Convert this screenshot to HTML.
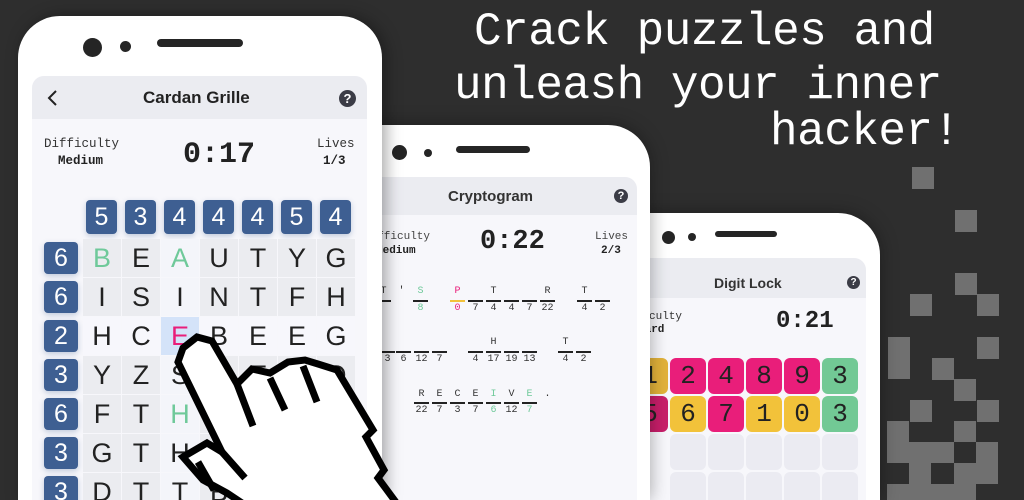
<!DOCTYPE html>
<html style="width:1024px;height:500px;overflow:hidden"><head><meta charset="utf-8"><style>
*{margin:0;padding:0;box-sizing:border-box}
body{width:1024px;height:500px;overflow:hidden;background:#2e2e2e;position:relative;font-family:"Liberation Sans",sans-serif}
.a{position:absolute}
.mono{font-family:"Liberation Mono",monospace}
.phone{position:absolute;background:#fff;border-radius:42px;box-shadow:0 0 18px rgba(0,0,0,.35);overflow:hidden}
.scr{position:absolute;background:#f7f7fb;border-radius:12px 12px 0 0;overflow:hidden}
.hdr{position:absolute;left:0;right:0;top:0;background:#ebecf1}
.q{position:absolute;border-radius:50%;background:#3b3c46;color:#fff;font-weight:bold;text-align:center}
.dot{position:absolute;border-radius:50%;background:#252525}
.bar{position:absolute;background:#252525;border-radius:4px}
.sq{position:absolute;width:22px;height:22px;background:#707070}
.ch{position:absolute;width:31px;height:34px;background:#3e5f92;border-radius:4px;color:#fff;font-size:25px;text-align:center;line-height:34px;font-family:"Liberation Sans",sans-serif;box-shadow:0 2px 6px rgba(62,95,146,.3)}
.rn{position:absolute;width:34px;height:32px;background:#3e5f92;border-radius:4px;color:#fff;font-size:25px;text-align:center;line-height:32px;box-shadow:0 2px 6px rgba(62,95,146,.3)}
.c{position:absolute;width:38px;height:38px;background:#ebecf0;font-family:"Liberation Sans",sans-serif;font-size:27px;text-align:center;line-height:38px;color:#222}
.t{position:absolute;width:36px;height:36px;border-radius:6px;font-family:"Liberation Mono",monospace;font-size:26px;text-align:center;line-height:36px;color:#222}
.cl{position:absolute;width:15px;text-align:center;font-family:"Liberation Mono",monospace;font-size:10px;color:#333}
.ln{position:absolute;width:15px;height:2px;background:#222}
.title{position:absolute;color:#fff;font-family:"Liberation Mono",monospace;font-weight:normal;font-size:46px;white-space:nowrap;letter-spacing:-0.5px}
</style></head><body>

<div class="title" style="left:474px;top:6px">Crack puzzles and</div>
<div class="title" style="left:454px;top:60px">unleash your inner</div>
<div class="title" style="left:770px;top:106px">hacker!</div>

<div class="sq" style="left:912px;top:167px"></div>
<div class="sq" style="left:955px;top:210px"></div>
<div class="sq" style="left:955px;top:273px"></div>
<div class="sq" style="left:910px;top:294px"></div>
<div class="sq" style="left:977px;top:294px"></div>
<div class="sq" style="left:888px;top:337px;height:42px"></div>
<div class="sq" style="left:977px;top:337px"></div>
<div class="sq" style="left:932px;top:358px"></div>
<div class="sq" style="left:954px;top:379px"></div>
<div class="sq" style="left:910px;top:400px"></div>
<div class="sq" style="left:977px;top:400px"></div>
<div class="sq" style="left:887px;top:421px;height:21px"></div>
<div class="sq" style="left:954px;top:421px;height:21px"></div>
<div class="sq" style="left:887px;top:442px;width:67px;height:21px"></div>
<div class="sq" style="left:976px;top:442px;height:21px"></div>
<div class="sq" style="left:909px;top:463px;height:21px"></div>
<div class="sq" style="left:954px;top:463px;width:44px;height:21px"></div>
<div class="sq" style="left:887px;top:484px;width:89px;height:16px"></div>

<!-- phone 3 -->
<div class="phone" style="left:520px;top:213px;width:360px;height:287px;border-radius:42px 42px 0 0">
  <div class="dot" style="left:142px;top:18px;width:13px;height:13px"></div>
  <div class="dot" style="left:168px;top:20px;width:8px;height:8px"></div>
  <div class="bar" style="left:195px;top:18px;width:62px;height:6px"></div>
  <div class="scr" style="left:14px;top:45px;width:332px;height:260px">
    <div class="hdr" style="height:40px"></div>
    <div class="a" style="left:180px;top:17px;font-weight:bold;font-size:14px;color:#333">Digit Lock</div>
    <div class="q" style="left:313px;top:18px;width:13px;height:13px;font-size:10px;line-height:13px">?</div>
    <div class="a mono" style="left:82px;top:53px;font-size:11px;color:#333">Difficulty</div>
    <div class="a mono" style="left:104px;top:66px;font-size:11px;font-weight:bold;color:#222">Hard</div>
    <div class="a mono" style="left:242px;top:50px;font-size:24px;font-weight:bold;color:#222">0:21</div>
  </div>
</div>
<div class="t" style="left:632px;top:358px;background:#e2b23a">1</div>
<div class="t" style="left:670px;top:358px;background:#e91e7a">2</div>
<div class="t" style="left:708px;top:358px;background:#e91e7a">4</div>
<div class="t" style="left:746px;top:358px;background:#e91e7a">8</div>
<div class="t" style="left:784px;top:358px;background:#e91e7a">9</div>
<div class="t" style="left:822px;top:358px;background:#72c995">3</div>
<div class="t" style="left:632px;top:396px;background:#c81e6a">5</div>
<div class="t" style="left:670px;top:396px;background:#f2c23a">6</div>
<div class="t" style="left:708px;top:396px;background:#e91e7a">7</div>
<div class="t" style="left:746px;top:396px;background:#f2c23a">1</div>
<div class="t" style="left:784px;top:396px;background:#f2c23a">0</div>
<div class="t" style="left:822px;top:396px;background:#72c995">3</div>
<div class="t" style="left:670px;top:434px;background:#ebebf2"></div>
<div class="t" style="left:708px;top:434px;background:#ebebf2"></div>
<div class="t" style="left:746px;top:434px;background:#ebebf2"></div>
<div class="t" style="left:784px;top:434px;background:#ebebf2"></div>
<div class="t" style="left:822px;top:434px;background:#ebebf2"></div>
<div class="t" style="left:670px;top:472px;background:#ebebf2"></div>
<div class="t" style="left:708px;top:472px;background:#ebebf2"></div>
<div class="t" style="left:746px;top:472px;background:#ebebf2"></div>
<div class="t" style="left:784px;top:472px;background:#ebebf2"></div>
<div class="t" style="left:822px;top:472px;background:#ebebf2"></div>

<!-- phone 2 -->
<div class="phone" style="left:300px;top:125px;width:350px;height:375px;border-radius:42px 42px 0 0">
  <div class="dot" style="left:92px;top:20px;width:15px;height:15px"></div>
  <div class="dot" style="left:124px;top:24px;width:8px;height:8px"></div>
  <div class="bar" style="left:156px;top:21px;width:74px;height:7px"></div>
  <div class="scr" style="left:14px;top:52px;width:323px;height:330px">
    <div class="hdr" style="height:38px"></div>
    <div class="a" style="left:134px;top:11px;font-weight:bold;font-size:15px;color:#333">Cryptogram</div>
    <div class="q" style="left:300px;top:12px;width:14px;height:14px;font-size:11px;line-height:14px">?</div>
    <div class="a mono" style="left:50px;top:54px;font-size:11px;color:#444">Difficulty</div>
    <div class="a mono" style="left:62px;top:68px;font-size:11px;font-weight:bold;color:#222">Medium</div>
    <div class="a mono" style="left:166px;top:50px;font-size:27px;font-weight:bold;color:#222">0:22</div>
    <div class="a mono" style="left:281px;top:54px;font-size:11px;color:#444">Lives</div>
    <div class="a mono" style="left:287px;top:68px;font-size:11px;font-weight:bold;color:#222">2/3</div>
  </div>
</div>
<div class="cl" style="left:376px;top:286px">T</div><div class="ln" style="left:376px;top:300px"></div>
<div class="cl" style="left:394px;top:286px">'</div>
<div class="cl" style="left:413px;top:286px;color:#6fc99a">S</div><div class="ln" style="left:413px;top:300px"></div><div class="cl" style="left:413px;top:303px;color:#6fc99a">8</div>
<div class="cl" style="left:450px;top:286px;color:#e91e7a">P</div><div class="ln" style="left:450px;top:300px;background:#f2c23a"></div><div class="cl" style="left:450px;top:303px;color:#e91e7a">0</div>
<div class="ln" style="left:468px;top:300px"></div><div class="cl" style="left:468px;top:303px">7</div>
<div class="cl" style="left:486px;top:286px">T</div><div class="ln" style="left:486px;top:300px"></div><div class="cl" style="left:486px;top:303px">4</div>
<div class="ln" style="left:504px;top:300px"></div><div class="cl" style="left:504px;top:303px">4</div>
<div class="ln" style="left:522px;top:300px"></div><div class="cl" style="left:522px;top:303px">7</div>
<div class="cl" style="left:540px;top:286px">R</div><div class="ln" style="left:540px;top:300px"></div><div class="cl" style="left:540px;top:303px">22</div>
<div class="cl" style="left:577px;top:286px">T</div><div class="ln" style="left:577px;top:300px"></div><div class="cl" style="left:577px;top:303px">4</div>
<div class="ln" style="left:595px;top:300px"></div><div class="cl" style="left:595px;top:303px">2</div>

<div class="ln" style="left:380px;top:351px"></div><div class="cl" style="left:380px;top:354px">3</div>
<div class="ln" style="left:396px;top:351px"></div><div class="cl" style="left:396px;top:354px">6</div>
<div class="ln" style="left:414px;top:351px"></div><div class="cl" style="left:414px;top:354px">12</div>
<div class="ln" style="left:432px;top:351px"></div><div class="cl" style="left:432px;top:354px">7</div>
<div class="ln" style="left:468px;top:351px"></div><div class="cl" style="left:468px;top:354px">4</div>
<div class="cl" style="left:486px;top:337px">H</div><div class="ln" style="left:486px;top:351px"></div><div class="cl" style="left:486px;top:354px">17</div>
<div class="ln" style="left:504px;top:351px"></div><div class="cl" style="left:504px;top:354px">19</div>
<div class="ln" style="left:522px;top:351px"></div><div class="cl" style="left:522px;top:354px">13</div>
<div class="cl" style="left:558px;top:337px">T</div><div class="ln" style="left:558px;top:351px"></div><div class="cl" style="left:558px;top:354px">4</div>
<div class="ln" style="left:576px;top:351px"></div><div class="cl" style="left:576px;top:354px">2</div>

<div class="cl" style="left:414px;top:389px">R</div><div class="ln" style="left:414px;top:402px"></div><div class="cl" style="left:414px;top:405px">22</div>
<div class="cl" style="left:432px;top:389px">E</div><div class="ln" style="left:432px;top:402px"></div><div class="cl" style="left:432px;top:405px">7</div>
<div class="cl" style="left:450px;top:389px">C</div><div class="ln" style="left:450px;top:402px"></div><div class="cl" style="left:450px;top:405px">3</div>
<div class="cl" style="left:468px;top:389px">E</div><div class="ln" style="left:468px;top:402px"></div><div class="cl" style="left:468px;top:405px">7</div>
<div class="cl" style="left:486px;top:389px;color:#6fc99a">I</div><div class="ln" style="left:486px;top:402px"></div><div class="cl" style="left:486px;top:405px;color:#6fc99a">6</div>
<div class="cl" style="left:504px;top:389px">V</div><div class="ln" style="left:504px;top:402px"></div><div class="cl" style="left:504px;top:405px">12</div>
<div class="cl" style="left:522px;top:389px;color:#6fc99a">E</div><div class="ln" style="left:522px;top:402px"></div><div class="cl" style="left:522px;top:405px;color:#6fc99a">7</div>
<div class="cl" style="left:540px;top:389px">.</div>

<!-- phone 1 -->
<div class="phone" style="left:18px;top:16px;width:364px;height:484px;border-radius:42px 42px 0 0;box-shadow:4px 0 16px rgba(0,0,0,.35)">
  <div class="dot" style="left:65px;top:22px;width:19px;height:19px"></div>
  <div class="dot" style="left:102px;top:25px;width:11px;height:11px"></div>
  <div class="bar" style="left:139px;top:23px;width:86px;height:8px"></div>
  <div class="scr" style="left:14px;top:60px;width:335px;height:430px">
    <div class="hdr" style="height:43px"></div>
    <svg class="a" style="left:14px;top:13px" width="14" height="18"><path d="M10 2 L3 9 L10 16" fill="none" stroke="#222" stroke-width="2"/></svg>
    <div class="a" style="left:111px;top:12px;font-weight:bold;font-size:17px;color:#222">Cardan Grille</div>
    <div class="q" style="left:307px;top:14px;width:17px;height:17px;font-size:13px;line-height:17px">?</div>
    <div class="a mono" style="left:12px;top:61px;font-size:12.5px;color:#333">Difficulty</div>
    <div class="a mono" style="left:26px;top:78px;font-size:12.5px;font-weight:bold;color:#222">Medium</div>
    <div class="a mono" style="left:151px;top:62px;font-size:30px;font-weight:bold;color:#222">0:17</div>
    <div class="a mono" style="left:285px;top:61px;font-size:12.5px;color:#333">Lives</div>
    <div class="a mono" style="left:291px;top:78px;font-size:12.5px;font-weight:bold;color:#222">1/3</div>
  </div>
</div>
<div class="ch" style="left:86px;top:200px">5</div>
<div class="ch" style="left:125px;top:200px">3</div>
<div class="ch" style="left:164px;top:200px">4</div>
<div class="ch" style="left:203px;top:200px">4</div>
<div class="ch" style="left:242px;top:200px">4</div>
<div class="ch" style="left:281px;top:200px">5</div>
<div class="ch" style="left:320px;top:200px">4</div>

<div class="rn" style="left:44px;top:242px">6</div>
<div class="rn" style="left:44px;top:281px">6</div>
<div class="rn" style="left:44px;top:320px">2</div>
<div class="rn" style="left:44px;top:359px">3</div>
<div class="rn" style="left:44px;top:398px">6</div>
<div class="rn" style="left:44px;top:437px">3</div>
<div class="rn" style="left:44px;top:476px">3</div>

<div class="c" style="left:83px;top:239px;color:#6fc99a">B</div><div class="c" style="left:122px;top:239px">E</div><div class="c" style="left:161px;top:239px;background:#f4f5fa;color:#6fc99a">A</div><div class="c" style="left:200px;top:239px">U</div><div class="c" style="left:239px;top:239px">T</div><div class="c" style="left:278px;top:239px">Y</div><div class="c" style="left:317px;top:239px">G</div>
<div class="c" style="left:83px;top:278px">I</div><div class="c" style="left:122px;top:278px">S</div><div class="c" style="left:161px;top:278px;background:#f4f5fa">I</div><div class="c" style="left:200px;top:278px">N</div><div class="c" style="left:239px;top:278px">T</div><div class="c" style="left:278px;top:278px">F</div><div class="c" style="left:317px;top:278px">H</div>
<div class="c" style="left:83px;top:317px;background:#f7f7fc">H</div><div class="c" style="left:122px;top:317px;background:#f7f7fc">C</div><div class="c" style="left:161px;top:317px;background:#d4e3f9;color:#e91e7a">E</div><div class="c" style="left:200px;top:317px;background:#f7f7fc">B</div><div class="c" style="left:239px;top:317px;background:#f7f7fc">E</div><div class="c" style="left:278px;top:317px;background:#f7f7fc">E</div><div class="c" style="left:317px;top:317px;background:#f7f7fc">G</div>
<div class="c" style="left:83px;top:356px">Y</div><div class="c" style="left:122px;top:356px">Z</div><div class="c" style="left:161px;top:356px;background:#f4f5fa">S</div><div class="c" style="left:200px;top:356px">O</div><div class="c" style="left:239px;top:356px">T</div><div class="c" style="left:278px;top:356px;color:#e91e7a">T</div><div class="c" style="left:317px;top:356px">O</div>
<div class="c" style="left:83px;top:395px">F</div><div class="c" style="left:122px;top:395px">T</div><div class="c" style="left:161px;top:395px;background:#f4f5fa;color:#6fc99a">H</div><div class="c" style="left:200px;top:395px">E</div><div class="c" style="left:239px;top:395px">R</div><div class="c" style="left:278px;top:395px">E</div><div class="c" style="left:317px;top:395px">S</div>
<div class="c" style="left:83px;top:434px">G</div><div class="c" style="left:122px;top:434px">T</div><div class="c" style="left:161px;top:434px;background:#f4f5fa">H</div><div class="c" style="left:200px;top:434px">W</div><div class="c" style="left:239px;top:434px">A</div><div class="c" style="left:278px;top:434px">N</div><div class="c" style="left:317px;top:434px">E</div>
<div class="c" style="left:83px;top:473px">D</div><div class="c" style="left:122px;top:473px">T</div><div class="c" style="left:161px;top:473px;background:#f4f5fa">T</div><div class="c" style="left:200px;top:473px">B</div><div class="c" style="left:239px;top:473px">A</div><div class="c" style="left:278px;top:473px">R</div><div class="c" style="left:317px;top:473px">E</div>

<svg class="a" style="left:0;top:0" width="1024" height="500">
  <polygon points="183,348 197,337 212,341 237,384 252,369 270,373 288,362 305,360 318,364 337,370 373,430 366,437 384,470 378,478 398,505 245,505 227,493 203,480 183,457 207,443 222,452 178,362"
    fill="#fff" stroke="#000" stroke-width="7" stroke-linejoin="miter"/>
  <path d="M237,384 L253,426 M270,378 L285,410 M303,366 L317,402 M222,452 L245,478 M198,462 L214,490" fill="none" stroke="#000" stroke-width="7"/>
</svg>
</body></html>
